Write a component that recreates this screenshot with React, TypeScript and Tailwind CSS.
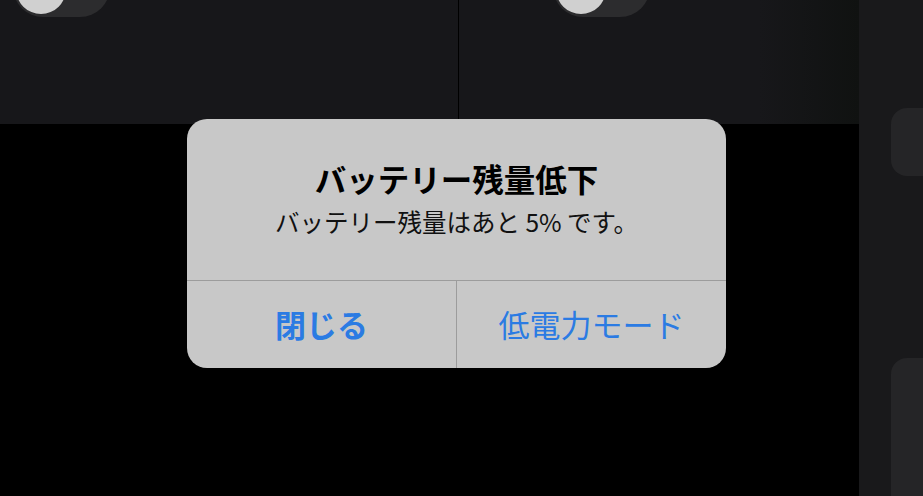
import React from "react";

// ── Toggle (cut off by the top edge) ─────────────────────────────────────────
function Toggle() {
  return (
    <div className="relative -mt-[43px] h-[60px] w-[97px] rounded-full bg-[#2c2c2e]">
      <div className="absolute left-[3px] top-[7px] h-[50px] w-[50px] rounded-full bg-[#d0d0d0]" />
    </div>
  );
}

export default function App() {
  return (
    <div
      className="relative flex h-[496px] w-[923px] overflow-hidden bg-black"
      style={{ fontFamily: '"Noto Sans CJK JP", "Noto Sans", sans-serif' }}
    >
      {/* ── Main area ─────────────────────────────────────────────────────── */}
      <div className="flex w-[859px] flex-col">
        <div className="flex h-[124px]">
          <div className="w-[458px] bg-[#17171a] pl-[13px]">
            <Toggle />
          </div>
          <div className="w-[1px] bg-black" />
          <div className="flex-1 bg-gradient-to-r from-[#17171a] from-75% to-[#101211] pl-[94px]">
            <Toggle />
          </div>
        </div>
        <div className="flex-1 bg-black" />
      </div>

      {/* ── Right column ──────────────────────────────────────────────────── */}
      <div className="flex flex-1 flex-col bg-[#19191b] pl-[32px] pt-[108px]">
        <div className="h-[68px] shrink-0 rounded-l-[16px] bg-[#252527]" />
        <div className="mt-[182px] h-[200px] shrink-0 rounded-l-[16px] bg-[#252527]" />
      </div>

      {/* ── Alert ─────────────────────────────────────────────────────────── */}
      <div className="absolute left-[187px] top-[119px] w-[539px] overflow-hidden rounded-[20px] bg-[#c8c8c8]">
        <div className="flex h-[161px] flex-col items-center pt-[41px]">
          <div className="text-[31.5px] font-bold leading-[37px] text-black">
            バッテリー残量低下
          </div>
          <div className="mt-[10px] text-[24.5px] leading-[29px] text-[#111]">
            バッテリー残量はあと 5% です。
          </div>
        </div>
        <div className="flex h-[88px] border-t border-[#9c9c9c]">
          <button className="flex w-[270px] items-center justify-center border-r border-[#9c9c9c] text-[31px] font-bold text-[#2b7be3]">
            閉じる
          </button>
          <button className="flex flex-1 items-center justify-center text-[31px] text-[#2b7be3]">
            低電力モード
          </button>
        </div>
      </div>
    </div>
  );
}
